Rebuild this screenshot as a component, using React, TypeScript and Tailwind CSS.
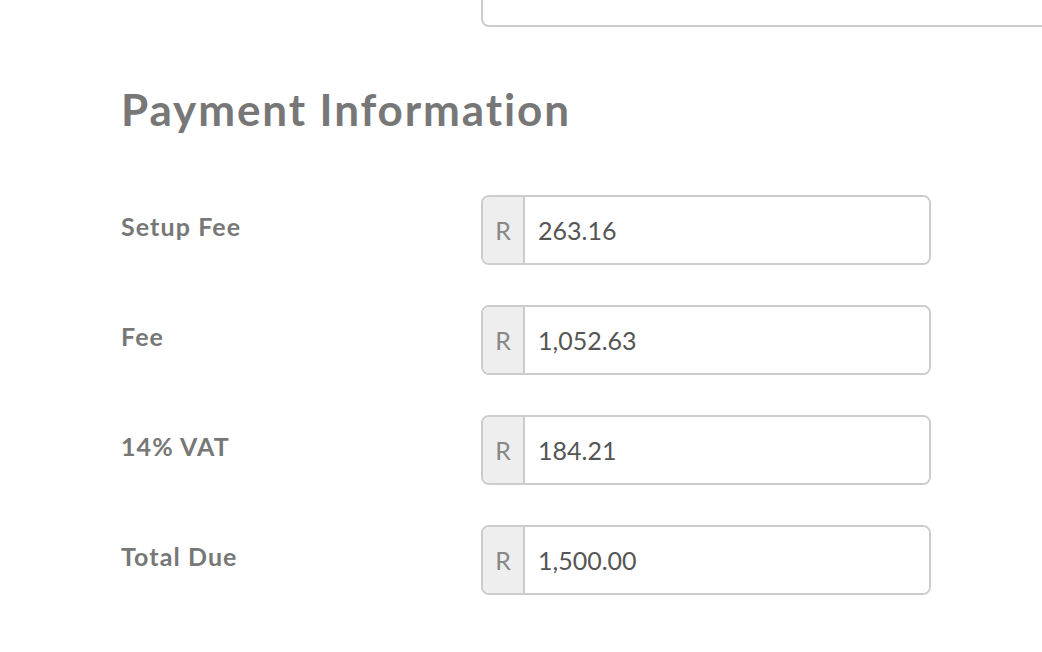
import React from 'react';

interface FeeRow {
  label: string;
  value: string;
}

const rows: FeeRow[] = [
  { label: 'Setup Fee', value: '263.16' },
  { label: 'Fee', value: '1,052.63' },
  { label: '14% VAT', value: '184.21' },
  { label: 'Total Due', value: '1,500.00' },
];

function CurrencyInput({ value }: { value: string }) {
  return (
    <div className="flex w-[450px] h-[70px] border-2 border-[#cccccc] rounded-[8px] overflow-hidden bg-white">
      <div className="w-[42px] flex items-center justify-center bg-[#eeeeee] border-r-2 border-[#cccccc] text-[#888888] text-[25px] pt-[2px]">
        R
      </div>
      <input
        readOnly
        value={value}
        className="flex-1 pl-[13px] pr-3 pt-[2px] text-[25px] text-[#555555] outline-none bg-white"
        style={{ fontFamily: 'Lato, sans-serif' }}
      />
    </div>
  );
}

export default function App() {
  return (
    <div className="w-[1042px] h-[652px] overflow-hidden bg-white font-['Lato',sans-serif]">
      <div className="pl-[121px]">
        <div className="ml-[360px] h-[27px] w-[700px] border-2 border-t-0 border-[#cccccc] rounded-b-[8px]" />

        <h2 className="mt-[52px] text-[44px] leading-[60px] font-bold text-[#777777] tracking-[1.9px]">
          Payment Information
        </h2>

        <div className="mt-[56px] flex flex-col gap-[40px]">
          {rows.map((row) => (
            <div key={row.label} className="flex items-start">
              <div className="w-[360px] pt-[16px] text-[25px] font-bold text-[#777777] leading-[30px] tracking-[1.1px]">
                {row.label}
              </div>
              <CurrencyInput value={row.value} />
            </div>
          ))}
        </div>
      </div>
    </div>
  );
}
